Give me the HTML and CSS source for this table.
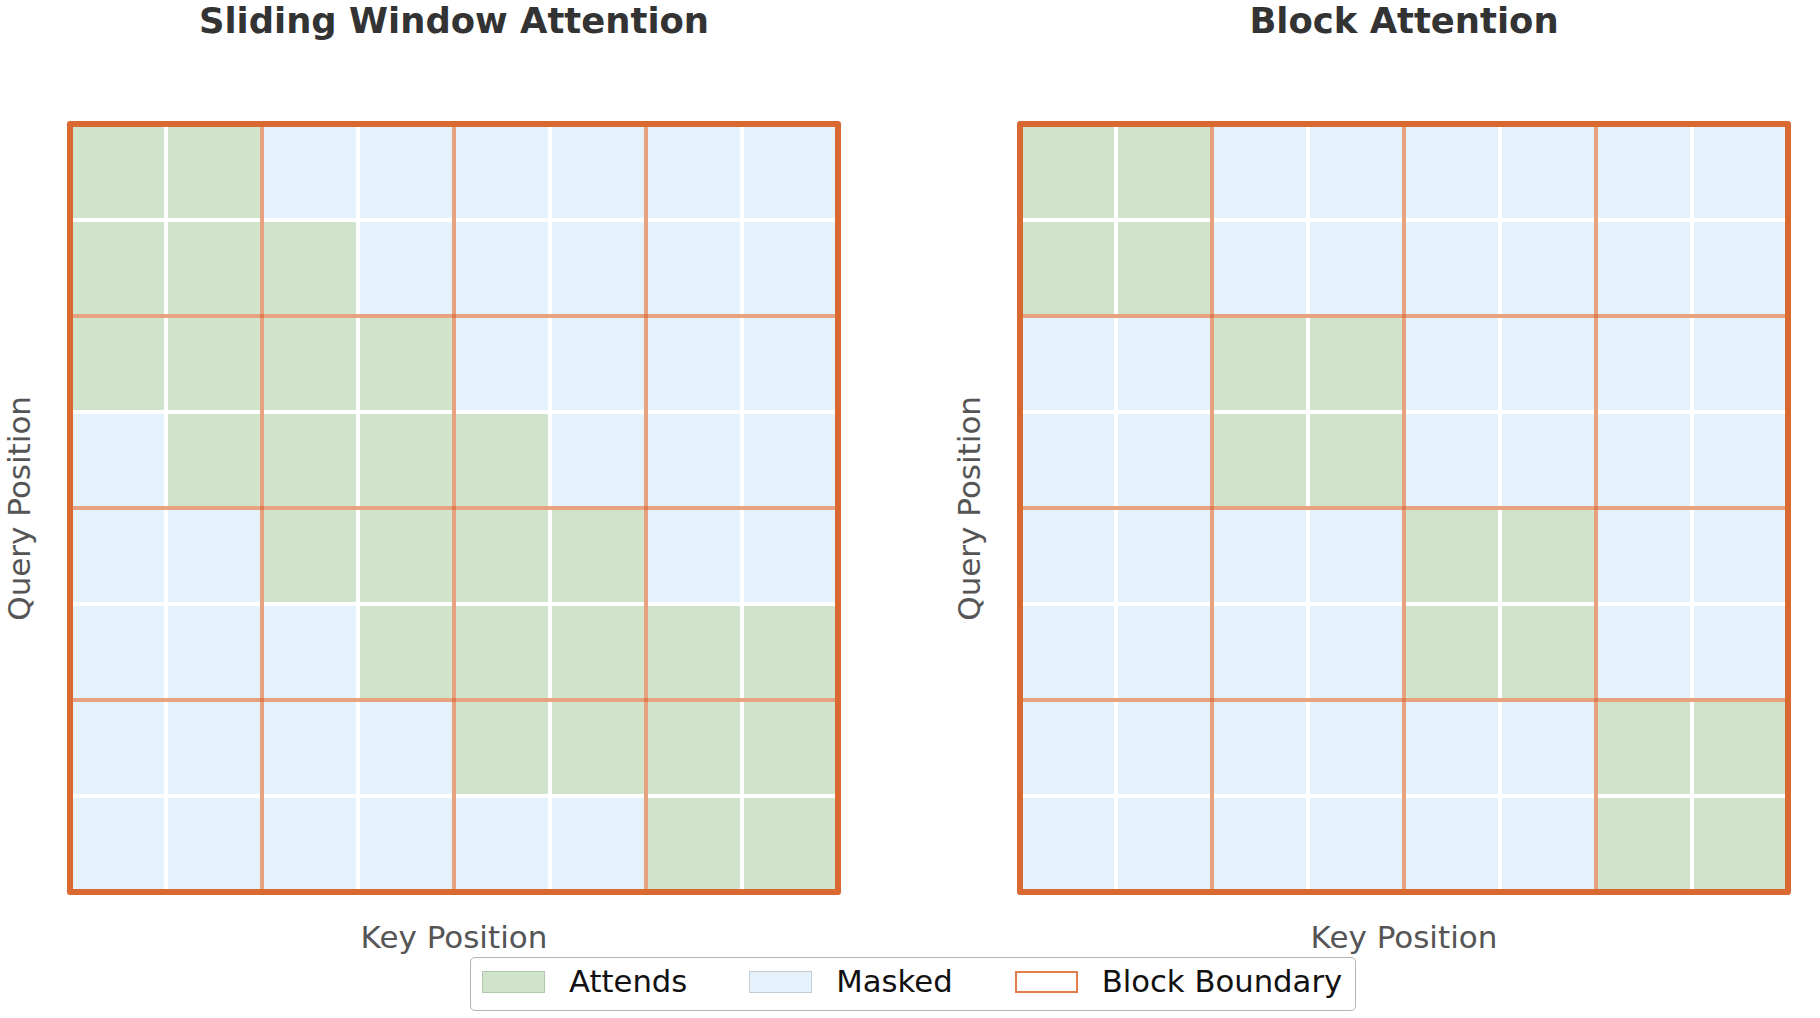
FILE: index.html
```html
<!DOCTYPE html>
<html lang="en">
<head>
<meta charset="utf-8">
<title>Sliding Window vs Block Attention</title>
<link rel="stylesheet" href="styles.css">
</head>
<body>
<div class="figure">
  <div class="panels">
    <section class="panel">
      <h2 class="title">Sliding Window Attention</h2>
      <div class="ylabel"><span>Query Position</span></div>
      <div class="matrix">
        <div class="c a"></div><div class="c a"></div><div class="c m"></div><div class="c m"></div><div class="c m"></div><div class="c m"></div><div class="c m"></div><div class="c m"></div>
        <div class="c a"></div><div class="c a"></div><div class="c a"></div><div class="c m"></div><div class="c m"></div><div class="c m"></div><div class="c m"></div><div class="c m"></div>
        <div class="c a"></div><div class="c a"></div><div class="c a"></div><div class="c a"></div><div class="c m"></div><div class="c m"></div><div class="c m"></div><div class="c m"></div>
        <div class="c m"></div><div class="c a"></div><div class="c a"></div><div class="c a"></div><div class="c a"></div><div class="c m"></div><div class="c m"></div><div class="c m"></div>
        <div class="c m"></div><div class="c m"></div><div class="c a"></div><div class="c a"></div><div class="c a"></div><div class="c a"></div><div class="c m"></div><div class="c m"></div>
        <div class="c m"></div><div class="c m"></div><div class="c m"></div><div class="c a"></div><div class="c a"></div><div class="c a"></div><div class="c a"></div><div class="c a"></div>
        <div class="c m"></div><div class="c m"></div><div class="c m"></div><div class="c m"></div><div class="c a"></div><div class="c a"></div><div class="c a"></div><div class="c a"></div>
        <div class="c m"></div><div class="c m"></div><div class="c m"></div><div class="c m"></div><div class="c m"></div><div class="c m"></div><div class="c a"></div><div class="c a"></div>
        <div class="bl bv p1"></div><div class="bl bv p2"></div><div class="bl bv p3"></div>
        <div class="bl bh p1"></div><div class="bl bh p2"></div><div class="bl bh p3"></div>
        <div class="frame"></div>
      </div>
      <div class="xlabel">Key Position</div>
    </section>
    <section class="panel">
      <h2 class="title">Block Attention</h2>
      <div class="ylabel"><span>Query Position</span></div>
      <div class="matrix">
        <div class="c a"></div><div class="c a"></div><div class="c m"></div><div class="c m"></div><div class="c m"></div><div class="c m"></div><div class="c m"></div><div class="c m"></div>
        <div class="c a"></div><div class="c a"></div><div class="c m"></div><div class="c m"></div><div class="c m"></div><div class="c m"></div><div class="c m"></div><div class="c m"></div>
        <div class="c m"></div><div class="c m"></div><div class="c a"></div><div class="c a"></div><div class="c m"></div><div class="c m"></div><div class="c m"></div><div class="c m"></div>
        <div class="c m"></div><div class="c m"></div><div class="c a"></div><div class="c a"></div><div class="c m"></div><div class="c m"></div><div class="c m"></div><div class="c m"></div>
        <div class="c m"></div><div class="c m"></div><div class="c m"></div><div class="c m"></div><div class="c a"></div><div class="c a"></div><div class="c m"></div><div class="c m"></div>
        <div class="c m"></div><div class="c m"></div><div class="c m"></div><div class="c m"></div><div class="c a"></div><div class="c a"></div><div class="c m"></div><div class="c m"></div>
        <div class="c m"></div><div class="c m"></div><div class="c m"></div><div class="c m"></div><div class="c m"></div><div class="c m"></div><div class="c a"></div><div class="c a"></div>
        <div class="c m"></div><div class="c m"></div><div class="c m"></div><div class="c m"></div><div class="c m"></div><div class="c m"></div><div class="c a"></div><div class="c a"></div>
        <div class="bl bv p1"></div><div class="bl bv p2"></div><div class="bl bv p3"></div>
        <div class="bl bh p1"></div><div class="bl bh p2"></div><div class="bl bh p3"></div>
        <div class="frame"></div>
      </div>
      <div class="xlabel">Key Position</div>
    </section>
  </div>
  <div class="legend-row">
    <div class="legend">
      <div class="item"><span class="swatch sw-a"></span><span class="label">Attends</span></div>
      <div class="item"><span class="swatch sw-m"></span><span class="label">Masked</span></div>
      <div class="item"><span class="swatch sw-b"></span><span class="label">Block Boundary</span></div>
    </div>
  </div>
</div>
</body>
</html>
```

FILE: styles.css
```css
html, body {
  margin: 0;
  padding: 0;
  background: #ffffff;
}

.figure {
  width: 1820px;
  height: 1018px;
  overflow: hidden;
  background: #ffffff;
  font-family: "DejaVu Sans", "Liberation Sans", sans-serif;
}

.panels {
  display: flex;
  gap: 109px;
}

.panel {
  display: grid;
  grid-template-columns: 67px 774px;
  grid-template-rows: auto 774px auto;
}

.title {
  grid-column: 2;
  grid-row: 1;
  margin: 0 0 80px 0;
  padding-top: 1px;
  height: 40px;
  font-size: 35.4px;
  line-height: 40px;
  font-weight: bold;
  color: #333333;
  text-align: center;
  white-space: nowrap;
}

.ylabel {
  grid-column: 1;
  grid-row: 2;
  display: flex;
  align-items: center;
  justify-content: flex-start;
}

.ylabel span {
  margin-left: 0.5px;
  writing-mode: vertical-rl;
  transform: rotate(180deg);
  font-size: 31px;
  line-height: 36px;
  color: #555555;
  white-space: nowrap;
}

.matrix {
  grid-column: 2;
  grid-row: 2;
  position: relative;
  box-sizing: border-box;
  width: 774px;
  height: 774px;
  padding: 3px;
  display: grid;
  grid-template-columns: repeat(8, 96px);
  grid-template-rows: repeat(8, 96px);
  background: #ffffff;
}

.c {
  box-sizing: border-box;
  border: 2px solid #ffffff;
}

.c.a {
  background: #cfe4cb;
}

.c.m {
  background: #e5f1fb;
}

.bl {
  position: absolute;
  background: rgba(219, 100, 45, 0.6);
}

.bv {
  top: 3px;
  bottom: 3px;
  width: 4px;
}

.bh {
  left: 3px;
  right: 3px;
  height: 4px;
}

.bv.p1 { left: 193px; }
.bv.p2 { left: 385px; }
.bv.p3 { left: 577px; }
.bh.p1 { top: 193px; }
.bh.p2 { top: 385px; }
.bh.p3 { top: 577px; }

.frame {
  position: absolute;
  inset: 0;
  border: 6px solid #da6831;
  border-radius: 3px;
}

.xlabel {
  grid-column: 2;
  grid-row: 3;
  margin-top: 24px;
  font-size: 31px;
  line-height: 36px;
  color: #555555;
  text-align: center;
}

.legend-row {
  display: flex;
  padding-left: 470px;
  margin-top: 2px;
}

.legend {
  display: flex;
  align-items: center;
  box-sizing: border-box;
  height: 54px;
  padding: 0 13px 4px 11px;
  border: 1px solid #b5b5b5;
  border-radius: 5px;
  background: #ffffff;
}

.item {
  display: flex;
  align-items: center;
  gap: 24px;
  margin-right: 62px;
}

.item:last-child {
  margin-right: 0;
}

.swatch {
  display: block;
  box-sizing: border-box;
  width: 63px;
  height: 22px;
}

.sw-a {
  background: #cfe4cb;
  border: 1.5px solid #b1c6ae;
}

.sw-m {
  background: #e5f1fb;
  border: 1.5px solid #c2cdd6;
}

.sw-b {
  background: #ffffff;
  border: 2.5px solid #e27c48;
}

.label {
  font-size: 30.7px;
  line-height: 36px;
  color: #111111;
  white-space: nowrap;
}
```
